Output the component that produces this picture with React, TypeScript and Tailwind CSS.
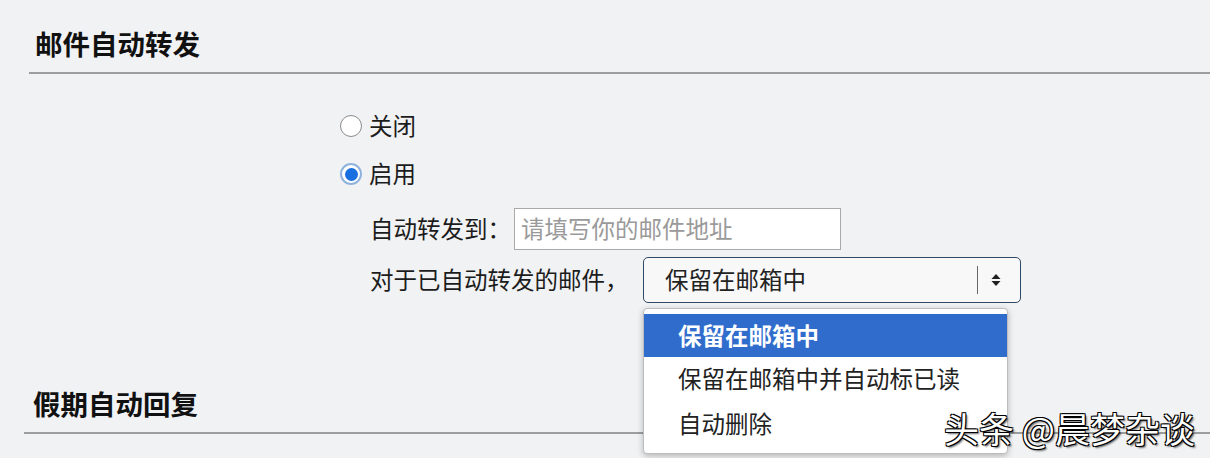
export default function App() {
  const font = { fontFamily: "'Noto Sans CJK SC', 'Noto Sans', sans-serif" };

  return (
    <div className="relative w-[1210px] h-[458px] overflow-hidden bg-[#f1f2f4] text-[#1c1c1c]" style={font}>
      {/* 邮件自动转发 */}
      <div className="pt-[28px] pl-[35px]">
        <h2 className="h-[30px] text-[27.5px] leading-[30px] font-bold text-[#111]">邮件自动转发</h2>
      </div>
      <div className="mt-[14px] ml-[29px] h-[2px] bg-[#9c9d9f]" />

      {/* radios */}
      <div className="mt-[28px] pl-[340px]">
        <label className="flex h-[48px] items-center gap-[7px]">
          <span className="w-[22px] h-[22px] rounded-full border border-[#8a8a8a] bg-white" />
          <span className="text-[23.5px] leading-none">关闭</span>
        </label>
        <label className="flex h-[48px] items-center gap-[7px]">
          <span className="flex w-[22px] h-[22px] items-center justify-center rounded-full border-2 border-[#8fb3dc] bg-white">
            <span className="w-[13px] h-[13px] rounded-full bg-[#1a6fe0]" />
          </span>
          <span className="text-[23.5px] leading-none">启用</span>
        </label>
      </div>

      {/* 自动转发到 */}
      <div className="mt-[10px] pl-[370px] flex items-center h-[42px]">
        <span className="w-[144px] text-[23.5px] leading-none">自动转发到：</span>
        <div className="flex h-[42px] w-[327px] items-center border border-[#a9a9a9] bg-white pl-[6px]">
          <span className="text-[23.5px] leading-none text-[#9a9a9a]">请填写你的邮件地址</span>
        </div>
      </div>

      {/* 对于已自动转发的邮件 */}
      <div className="mt-[7px] pl-[370px] flex items-center h-[46px]">
        <span className="w-[273px] text-[23.5px] leading-none">对于已自动转发的邮件，</span>
        <div className="relative">
          <div className="flex h-[46px] w-[378px] items-center rounded-[5px] border-[1.5px] border-[#2e4a66] bg-[#f8f8f8] pl-[21px] pr-[19px]">
            <span className="flex-1 text-[23.5px] leading-none text-[#222]">保留在邮箱中</span>
            <span className="h-[28px] w-px bg-[#666]" />
            <svg width="10" height="14" viewBox="0 0 10 14" className="ml-[13px]">
              <path d="M5 1 L9.5 6 H0.5 Z" fill="#222" />
              <path d="M5 13 L9.5 8 H0.5 Z" fill="#222" />
            </svg>
          </div>

          {/* dropdown menu */}
          <div className="absolute left-0 top-[51px] z-10 h-[146px] w-[365px] rounded-[4px] border border-[#bdbdbd] bg-white pt-[5px] shadow-[0_2px_6px_rgba(0,0,0,0.25)]">
            <div className="flex h-[43px] items-center bg-[#2f6ccc] pl-[34px] text-[23.5px] font-bold leading-none text-white">
              保留在邮箱中
            </div>
            <div className="flex h-[44px] items-center pl-[34px] text-[23.5px] leading-none text-[#222]">
              保留在邮箱中并自动标已读
            </div>
            <div className="flex h-[45px] items-center pl-[34px] text-[23.5px] leading-none text-[#222]">
              自动删除
            </div>
          </div>
        </div>
      </div>

      {/* 假期自动回复 */}
      <div className="mt-[85px] pl-[33px]">
        <h2 className="h-[30px] text-[27.5px] leading-[30px] font-bold text-[#111]">假期自动回复</h2>
      </div>
      <div className="mt-[14px] ml-[24px] h-[2px] bg-[#9c9d9f]" />

      {/* watermark */}
      <div
        className="absolute left-[944px] top-[408px] z-20 text-[35px] leading-[40px] text-white"
        style={{ textShadow: '1px 1px 0 #000, -1px -1px 0 #000, 1px -1px 0 #000, -1px 1px 0 #000, 2px 2px 2px rgba(0,0,0,0.6)' }}
      >
        头条 @晨梦杂谈
      </div>
    </div>
  );
}
